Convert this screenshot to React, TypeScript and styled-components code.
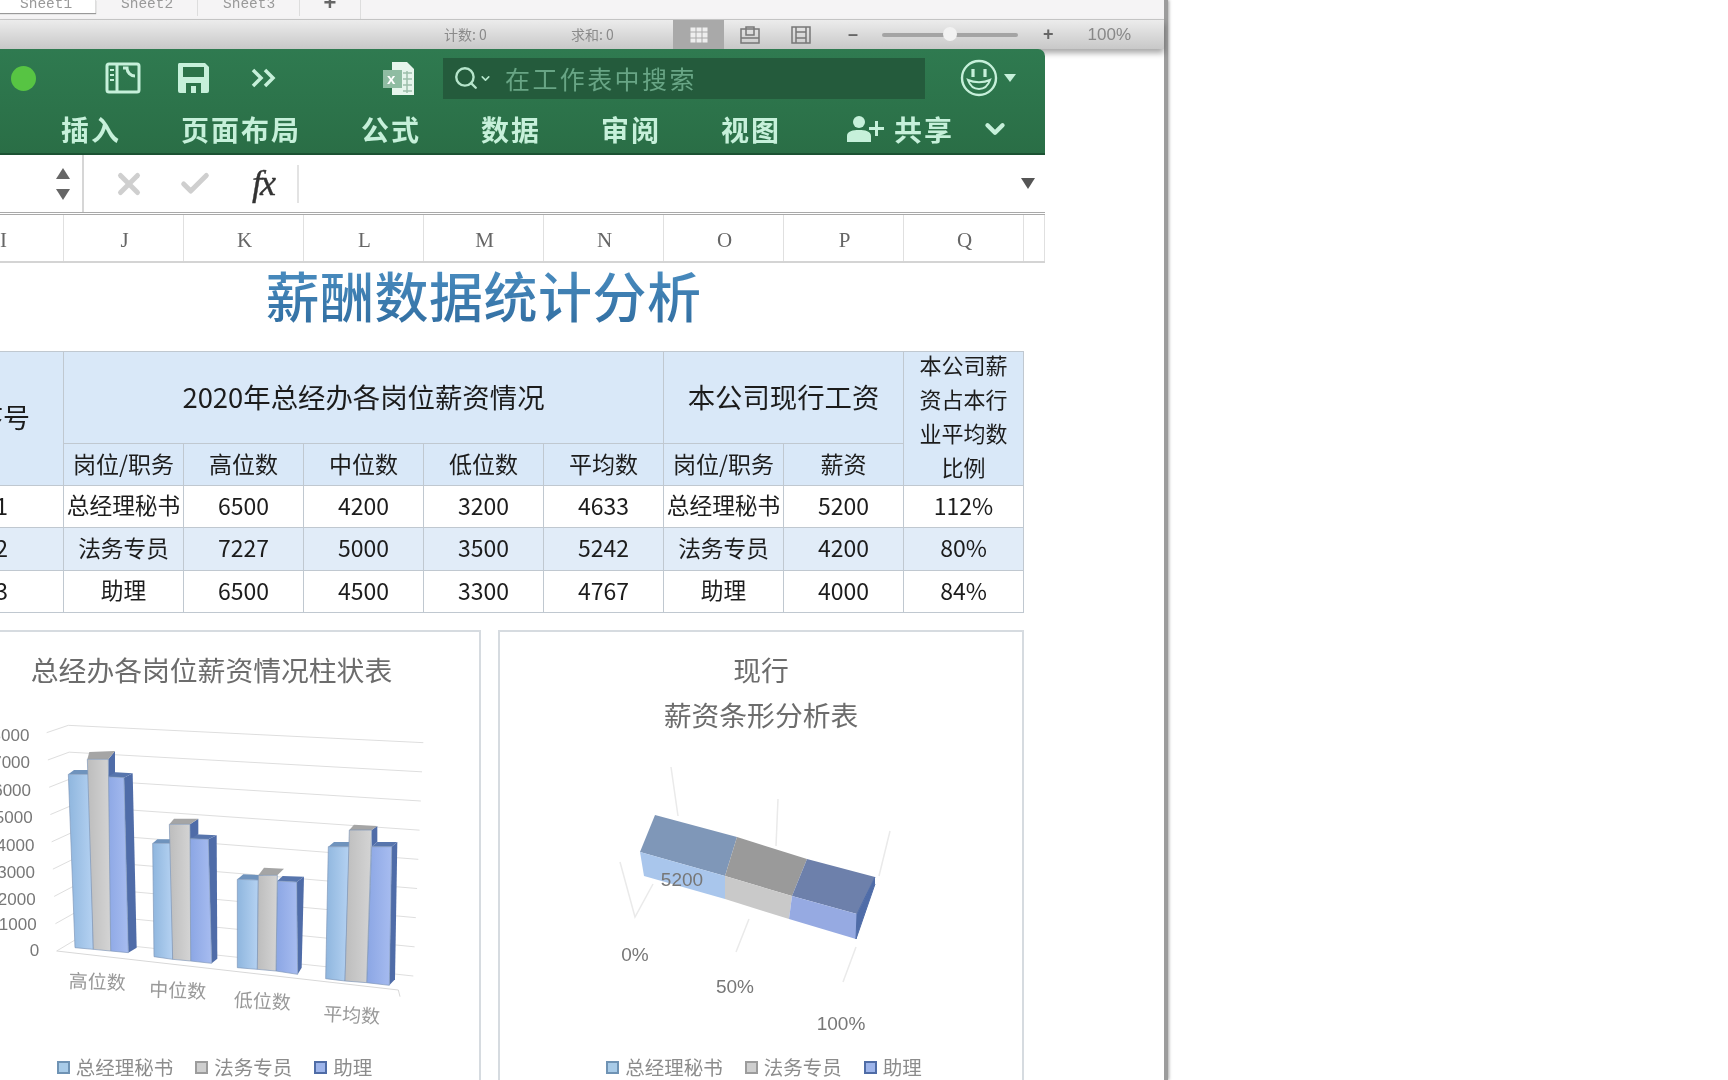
import React from 'react';
import styled, { createGlobalStyle } from 'styled-components';
import { Check, ChevronDown, Search, X } from 'lucide-react';

const cjk = `"Noto Sans CJK SC", "Noto Sans", sans-serif`;

const GlobalStyle = createGlobalStyle`
   html, body {
      margin: 0;
      padding: 0;
      background: #fff;
      overflow: hidden;
   }
`;

const Screen = styled.div`
   width: 1728px;
   height: 1080px;
   overflow: hidden;
   background: #fff;
   font-family: ${cjk};
   filter: blur(0.7px);
`;

const Window = styled.div`
   width: 1164px;
   height: 1080px;
   border-right: 4px solid #9c9c9c;
   box-shadow: 1px 0 3px rgba(0, 0, 0, 0.35);
   background: #fff;
`;

const BackTabs = styled.div`
   height: 19px;
   display: flex;
   background: #f5f4f5;
   border-bottom: 1px solid #c9c9c9;
`;

const BackTab = styled.div<{ $active?: boolean }>`
   width: ${(p) => (p.$active ? 96 : 102)}px;
   height: ${(p) => (p.$active ? 13 : 16)}px;
   box-sizing: border-box;
   padding-left: ${(p) => (p.$active ? 20 : 25)}px;
   font: 14.5px/9px 'Liberation Mono', monospace;
   color: #999;
   background: ${(p) => (p.$active ? '#fff' : 'transparent')};
   border-right: 1px solid #ddd;
   box-shadow: ${(p) => (p.$active ? '0 1px 1px #999' : 'none')};
`;

const BackAdd = styled.div`
   width: 60px;
   text-align: center;
   font: bold 22px/6px 'Liberation Sans', sans-serif;
   color: #666;
   border-right: 1px solid #ddd;
`;

const BackStatus = styled.div`
   height: 29px;
   display: flex;
   align-items: center;
   padding-left: 444px;
   font-size: 14px;
   color: #8a8a8a;
   background: linear-gradient(#ececec, #c8c8c8);
   box-shadow: 0 4px 6px rgba(0, 0, 0, 0.35);
   position: relative;
`;

const StatusText = styled.span<{ $width: number }>`
   width: ${(p) => p.$width}px;
   margin-top: -2px;
`;

const ViewButton = styled.div<{ $active?: boolean }>`
   width: 51px;
   height: 29px;
   display: flex;
   align-items: center;
   justify-content: center;
   background: ${(p) => (p.$active ? '#a9a9a9' : 'transparent')};
`;

const SliderTrack = styled.div`
   width: 136px;
   height: 4px;
   margin: 0 25px 0 24px;
   background: #a4a4a4;
   border-radius: 2px;
   position: relative;
`;

const SliderThumb = styled.div`
   position: absolute;
   left: 61px;
   top: -6px;
   width: 14px;
   height: 14px;
   border-radius: 50%;
   background: #f2f2f2;
`;

const ZoomSign = styled.span<{ $gap?: number }>`
   margin-left: ${(p) => p.$gap || 0}px;
   font: bold 18px 'Liberation Sans', sans-serif;
   color: #666;
`;

const ZoomValue = styled.span`
   margin-left: 34px;
   font: 17px 'Liberation Sans', sans-serif;
   color: #888;
`;

const Front = styled.div`
   width: 1045px;
   position: relative;
`;

const Ribbon = styled.div`
   height: 106px;
   background: linear-gradient(#2f7a50, #2a6e46);
   border-top-right-radius: 7px;
   border-bottom: 2px solid #1c5233;
   box-sizing: border-box;
   color: #c6f0da;
`;

const TitleRow = styled.div`
   height: 58px;
   display: flex;
   align-items: center;
   padding-left: 11px;
`;

const GreenDot = styled.div`
   width: 25px;
   height: 25px;
   border-radius: 50%;
   background: #57c443;
   margin-right: 69px;
`;

const ToolIcon = styled.svg<{ $gap: number }>`
   margin-right: ${(p) => p.$gap}px;
   flex: none;
`;

const SearchBox = styled.div`
   width: 482px;
   height: 41px;
   display: flex;
   align-items: center;
   padding-left: 10px;
   box-sizing: border-box;
   background: #245b3c;
   color: #b5e5cb;
   margin-right: 35px;
`;

const SearchHint = styled.span`
   margin-left: 13px;
   font-size: 25px;
   letter-spacing: 2.4px;
   color: #68a585;
`;

const MiniCaret = styled.div`
   width: 0;
   height: 0;
   margin-left: 6px;
   border-left: 6px solid transparent;
   border-right: 6px solid transparent;
   border-top: 8px solid #c6f0da;
`;

const TabRow = styled.div`
   height: 44px;
   display: flex;
   align-items: center;
   gap: 60px;
   padding-left: 61px;
   font-size: 28px;
   letter-spacing: 2px;
   font-weight: 700;
`;

const ShareGroup = styled.div`
   display: flex;
   align-items: center;
   margin-left: 5px;
`;

const ShareLabel = styled.span`
   margin: 0 26px 0 10px;
`;

const FormulaBar = styled.div`
   height: 57px;
   display: flex;
   align-items: center;
   border-bottom: 3px double #a9a9a9;
   box-sizing: content-box;
`;

const Stepper = styled.div`
   width: 84px;
   height: 57px;
   box-sizing: border-box;
   display: flex;
   flex-direction: column;
   align-items: flex-end;
   justify-content: center;
   gap: 10px;
   padding-right: 12px;
   border-right: 2px solid #d6d6d6;
   margin-right: 12px;
`;

const Triangle = styled.div<{ $down?: boolean; $color?: string }>`
   width: 0;
   height: 0;
   border-left: 7px solid transparent;
   border-right: 7px solid transparent;
   ${(p) =>
      p.$down
         ? `border-top: 11px solid ${p.$color || '#666'};`
         : `border-bottom: 11px solid ${p.$color || '#666'};`}
`;

const FormulaAction = styled.div`
   width: 66px;
   display: flex;
   justify-content: center;
   color: #cfcfcf;
`;

const FxLabel = styled.div`
   width: 68px;
   height: 38px;
   margin-left: 1px;
   border-right: 2px solid #e3e3e3;
   font: italic 36px/36px 'Liberation Serif', serif;
   color: #333;
   text-align: center;
   letter-spacing: -2px;
   -webkit-text-stroke: 0.4px #333;
`;

const FormulaEnd = styled.div`
   margin-left: auto;
   margin-right: 10px;
`;

const ColumnRow = styled.div`
   display: grid;
   grid-template-columns: 64px repeat(8, 120px) 21px;
   height: 46px;
   border-bottom: 2px solid #d4d4d4;
   box-sizing: content-box;
`;

const ColumnHead = styled.div<{ $first?: boolean }>`
   display: flex;
   align-items: center;
   justify-content: ${(p) => (p.$first ? 'flex-start' : 'center')};
   padding-top: 5px;
   padding-left: ${(p) => (p.$first ? 0 : 2)}px;
   border-right: 1px solid #e0e0e0;
   font: 21px 'Liberation Serif', serif;
   color: #666;
`;

const SheetTitle = styled.div`
   width: 967px;
   height: 88px;
   padding-bottom: 26px;
   box-sizing: border-box;
   display: flex;
   align-items: center;
   justify-content: center;
   font-size: 54px;
   font-weight: 500;
   letter-spacing: 0.5px;
`;

const TitleInk = styled.span`
   background: linear-gradient(#4f93c6, #2e6a9d);
   -webkit-background-clip: text;
   background-clip: text;
   color: transparent;
`;

const SalaryGrid = styled.div`
   display: grid;
   width: 1024px;
   grid-template-columns: 64px repeat(8, 120px);
   grid-template-rows: 92px 42px 42px 43px 42px;
   border-top: 1px solid #c0c8d0;
   box-sizing: content-box;
   color: #1c1c1c;
`;

const Cell = styled.div<{
   $tone?: 'head' | 'stripe' | 'plain';
   $size?: number;
   $col?: string;
   $row?: string;
   $cut?: number;
}>`
   display: flex;
   align-items: center;
   justify-content: ${(p) => (p.$cut ? 'flex-end' : 'center')};
   text-align: center;
   overflow: hidden;
   white-space: nowrap;
   box-sizing: border-box;
   padding-right: ${(p) => p.$cut || 0}px;
   padding-bottom: 4px;
   grid-column: ${(p) => p.$col || 'auto'};
   grid-row: ${(p) => p.$row || 'auto'};
   font-size: ${(p) => p.$size || 23}px;
   border-right: 1px solid #c0c8d0;
   border-bottom: 1px solid #c0c8d0;
   background: ${(p) =>
      p.$tone === 'head' ? '#d9e8f8' : p.$tone === 'stripe' ? '#e1ecf8' : '#fff'};
`;

const WrapText = styled.span`
   white-space: normal;
   width: 96px;
   margin-bottom: 3px;
   font-size: 22px;
   line-height: 34px;
`;

const ChartRow = styled.div`
   display: flex;
   gap: 17px;
   margin: 17px 0 0 -58px;
   width: 1082px;
`;

const ChartCard = styled.div<{ $width: number }>`
   width: ${(p) => p.$width}px;
   height: 460px;
   box-sizing: border-box;
   flex: none;
   background: #fff;
   border: 2px solid #d6dbe0;
   padding-top: 15px;
   overflow: hidden;
`;

const ChartTitle = styled.div`
   font-size: 27.8px;
   line-height: 45px;
   color: #6c6c6c;
   text-align: center;
`;

const ChartSvg = styled.svg`
   display: block;
`;

const Legend = styled.div`
   display: flex;
   justify-content: center;
   gap: 22px;
   padding-left: 6px;
   font-size: 19.5px;
   line-height: 26px;
   color: #8c8c8c;
`;

const LegendItem = styled.span`
   display: flex;
   align-items: center;
   gap: 6px;
`;

const LegendSwatch = styled.i<{ $color: string; $edge: string }>`
   width: 9px;
   height: 9px;
   background: ${(p) => p.$color};
   border: 2px solid ${(p) => p.$edge};
`;

const salaryRows = [
   { id: '1', job: '总经理秘书', vals: ['6500', '4200', '3200', '4633'], pay: '5200', ratio: '112%' },
   { id: '2', job: '法务专员', vals: ['7227', '5000', '3500', '5242'], pay: '4200', ratio: '80%' },
   { id: '3', job: '助理', vals: ['6500', '4500', '3300', '4767'], pay: '4000', ratio: '84%' },
];

const columns = ['I', 'J', 'K', 'L', 'M', 'N', 'O', 'P', 'Q', ''];
const ribbonTabs = ['插入', '页面布局', '公式', '数据', '审阅', '视图'];

const legendItems = [
   { label: '总经理秘书', color: '#a8cbe8', edge: '#6f93b4' },
   { label: '法务专员', color: '#cfcfcf', edge: '#9c9c9c' },
   { label: '助理', color: '#9db4ea', edge: '#4f6ca6' },
];

// bars are traced from the picture, coordinates are 3x page px
type Bar = { f: string; top: string; side?: string; fill: string; cap: string };

const columnBars: Bar[] = [
   { f: '205,465 268,465 280,990 225,985', top: '205,465 222,452 285,452 268,465', fill: 'url(#barBlue)', cap: '#6f93bd' },
   { f: '318,472 372,475 385,1000 332,995', top: '318,472 335,458 398,462 372,475', side: '372,475 398,462 410,985 385,1000', fill: 'url(#barPurple)', cap: '#5775ad' },
   { f: '262,420 325,420 332,995 280,990', top: '262,420 268,398 345,395 325,420', side: '325,420 345,395 345,460 325,470', fill: 'url(#barGray)', cap: '#a5a5a5' },
   { f: '458,672 515,672 518,1020 462,1012', top: '458,672 472,660 530,660 515,672', fill: 'url(#barBlue)', cap: '#6f93bd' },
   { f: '570,658 625,660 635,1032 572,1025', top: '570,658 585,645 650,648 625,660', side: '625,660 650,648 652,1018 635,1032', fill: 'url(#barPurple)', cap: '#5775ad' },
   { f: '508,615 570,615 572,1025 518,1020', top: '508,615 522,598 595,598 570,615', side: '570,615 595,598 595,645 570,658', fill: 'url(#barGray)', cap: '#a5a5a5' },
   { f: '712,780 775,782 772,1050 712,1045', top: '712,780 730,765 790,768 775,782', fill: 'url(#barBlue)', cap: '#6f93bd' },
   { f: '832,785 890,788 893,1065 828,1055', top: '832,785 848,770 912,772 890,788', side: '890,788 912,772 905,1045 893,1065', fill: 'url(#barPurple)', cap: '#5775ad' },
   { f: '775,768 832,768 828,1055 772,1050', top: '775,768 792,745 852,748 832,768', fill: 'url(#barGray)', cap: '#a5a5a5' },
   { f: '985,682 1048,682 1035,1085 977,1078', top: '985,682 1002,668 1065,668 1048,682', fill: 'url(#barBlue)', cap: '#6f93bd' },
   { f: '1115,682 1175,682 1168,1098 1100,1090', top: '1115,682 1132,668 1192,668 1175,682', side: '1175,682 1192,668 1185,1080 1168,1098', fill: 'url(#barPurple)', cap: '#5775ad' },
   { f: '1048,632 1115,632 1100,1090 1035,1085', top: '1048,632 1062,616 1132,620 1115,632', side: '1115,632 1132,620 1132,668 1115,682', fill: 'url(#barGray)', cap: '#a5a5a5' },
];

const axisLabels = [
   { t: '8000', x: 88, y: 347 },
   { t: '7000', x: 90, y: 430 },
   { t: '6000', x: 93, y: 513 },
   { t: '5000', x: 98, y: 595 },
   { t: '4000', x: 103, y: 678 },
   { t: '3000', x: 105, y: 760 },
   { t: '2000', x: 107, y: 840 },
   { t: '1000', x: 110, y: 915 },
   { t: '0', x: 118, y: 992 },
];

const categoryLabels = [
   { t: '高位数', x: 292, y: 1090, r: 2 },
   { t: '中位数', x: 533, y: 1116, r: 2 },
   { t: '低位数', x: 787, y: 1148, r: 3 },
   { t: '平均数', x: 1055, y: 1190, r: 3 },
];

const lerp = (a: number, b: number, t: number) => a + (b - a) * t;

const gridLines = Array.from({ length: 9 }, (_, i) => {
   const t = i / 8;
   return `${lerp(140, 170, t)},${lerp(340, 995, t)} ${lerp(205, 225, t)},${lerp(318, 962, t)} ${lerp(1270, 1240, t)},${lerp(370, 1070, t)}`;
});

const ColumnChart: React.FC = () => (
   <ChartSvg width={534} height={362} viewBox="-168 218 1602 1086">
      <defs>
         <linearGradient id="barBlue" x1="0" x2="1" y1="0" y2="0">
            <stop offset="0" stopColor="#8fb6de" />
            <stop offset="1" stopColor="#b5d2f2" />
         </linearGradient>
         <linearGradient id="barGray" x1="0" x2="1" y1="0" y2="0">
            <stop offset="0" stopColor="#bdbdbd" />
            <stop offset="1" stopColor="#d4d4d4" />
         </linearGradient>
         <linearGradient id="barPurple" x1="0" x2="1" y1="0" y2="0">
            <stop offset="0" stopColor="#8ba6e4" />
            <stop offset="1" stopColor="#a7bcf0" />
         </linearGradient>
      </defs>
      {gridLines.map((pts) => (
         <polyline key={pts} points={pts} fill="none" stroke="#dedede" strokeWidth="3" />
      ))}
      <polyline points="170,995 1195,1112 1200,1132" fill="none" stroke="#d8d8d8" strokeWidth="3" />
      {columnBars.map((b) => (
         <g key={b.f}>
            {b.side && <polygon points={b.side} fill="#4f6ca8" />}
            <polygon points={b.top} fill={b.cap} />
            <polygon points={b.f} fill={b.fill} stroke="#7d95b8" strokeWidth="2" />
         </g>
      ))}
      {axisLabels.map((a) => (
         <text key={a.t} x={a.x} y={a.y + 17} textAnchor="end" fontSize="51" fill="#777" fontFamily="'Liberation Sans', sans-serif">
            {a.t}
         </text>
      ))}
      {categoryLabels.map((c) => (
         <text
            key={c.t}
            x={c.x}
            y={c.y + 18}
            textAnchor="middle"
            fontSize="57"
            fill="#999"
            fontFamily={cjk}
            transform={`rotate(${c.r} ${c.x} ${c.y})`}
         >
            {c.t}
         </text>
      ))}
   </ChartSvg>
);

// page coordinates, the svg below starts at (500, 738)
const BarChart3D: React.FC = () => (
   <ChartSvg width={522} height={317} viewBox="500 738 522 317">
      <g fill="none" stroke="#eaeaea" strokeWidth="1.5">
         <polyline points="671,768 678,817" />
         <polyline points="778,800 776,847" />
         <polyline points="890,832 879,877" />
         <polyline points="620,863 635,918 653,885" />
         <polyline points="749,920 736,953" />
         <polyline points="856,948 843,983" />
      </g>
      <polygon points="655,816 737,838 725,877 640,853" fill="#7f97b8" />
      <polygon points="737,838 807,860 792,897 725,877" fill="#9a9a9a" />
      <polygon points="807,860 875,878 857,915 792,897" fill="#6d80ab" />
      <polygon points="640,853 725,877 725,900 644,877" fill="#a9c6ec" />
      <polygon points="725,877 792,897 789,920 725,900" fill="#c9c9c9" />
      <polygon points="792,897 857,915 856,940 789,920" fill="#96aae2" />
      <polyline points="875,878 857,915 856,940 875,885" fill="#4f6ca8" stroke="#4f6ca8" />
      <g fontSize="19" fill="#777" textAnchor="middle" fontFamily="'Liberation Sans', sans-serif">
         <text x="682" y="887">5200</text>
         <text x="635" y="962">0%</text>
         <text x="735" y="994">50%</text>
         <text x="841" y="1031">100%</text>
      </g>
   </ChartSvg>
);

const ChartLegend: React.FC = () => (
   <Legend>
      {legendItems.map((item) => (
         <LegendItem key={item.label}>
            <LegendSwatch $color={item.color} $edge={item.edge} />
            {item.label}
         </LegendItem>
      ))}
   </Legend>
);

const App: React.FC = () => (
   <Screen>
      <GlobalStyle />
      <Window>
         <BackTabs>
            <BackTab $active>Sheet1</BackTab>
            <BackTab>Sheet2</BackTab>
            <BackTab>Sheet3</BackTab>
            <BackAdd>+</BackAdd>
         </BackTabs>
         <BackStatus>
            <StatusText $width={127}>计数: 0</StatusText>
            <StatusText $width={102}>求和: 0</StatusText>
            <ViewButton $active>
               <svg width="20" height="18" viewBox="0 0 20 18" fill="#eee" stroke="#aaa">
                  <rect x="1" y="1" width="18" height="16" />
                  <path d="M7 1v16M13 1v16M1 6h18M1 12h18" />
               </svg>
            </ViewButton>
            <ViewButton>
               <svg width="20" height="18" viewBox="0 0 20 18" fill="none" stroke="#777" strokeWidth="1.5">
                  <path d="M1 3h18v14H1zM1 12h18M6 1h8v8H6z" />
               </svg>
            </ViewButton>
            <ViewButton>
               <svg width="20" height="18" viewBox="0 0 20 18" fill="none" stroke="#777" strokeWidth="1.5">
                  <path d="M1 1h18v16H1zM5 1v16M15 1v16M5 6h10M5 12h10" />
               </svg>
            </ViewButton>
            <ZoomSign $gap={22}>–</ZoomSign>
            <SliderTrack>
               <SliderThumb />
            </SliderTrack>
            <ZoomSign>+</ZoomSign>
            <ZoomValue>100%</ZoomValue>
         </BackStatus>
         <Front>
            <Ribbon>
               <TitleRow>
                  <GreenDot />
                  <ToolIcon $gap={36} width="36" height="32" viewBox="0 0 36 32" fill="none" stroke="#c6f0da" strokeWidth="3">
                     <rect x="2" y="2" width="32" height="28" rx="2" />
                     <path d="M12 2v28M18 6h4a8 8 0 0 0 8 8" />
                     <path d="M5 8h4M5 13h4M5 18h4" strokeWidth="2" />
                  </ToolIcon>
                  <ToolIcon $gap={40} width="33" height="32" viewBox="0 0 33 32">
                     <path fill="#c6f0da" d="M2 1h26l4 4v24a2 2 0 0 1-2 2H3a2 2 0 0 1-2-2V3a2 2 0 0 1 1-2z" />
                     <rect x="6" y="5" width="21" height="10" fill="#2c7349" />
                     <rect x="9" y="21" width="15" height="10" fill="#2c7349" />
                     <rect x="14" y="24" width="5" height="7" fill="#c6f0da" />
                  </ToolIcon>
                  <ToolIcon $gap={104} width="28" height="24" viewBox="0 0 28 24" fill="none" stroke="#c6f0da" strokeWidth="3.5">
                     <path d="M3 4l8 8-8 8M15 4l8 8-8 8" />
                  </ToolIcon>
                  <ToolIcon $gap={28} width="33" height="35" viewBox="0 0 33 35">
                     <path fill="#e6f5ec" d="M10 1h15l7 7v26H10z" />
                     <path stroke="#9dbfab" strokeWidth="1.5" fill="none" d="M21 12h9M21 18h9M21 24h9M21 30h9M25 10v22" />
                     <rect x="1" y="9" width="19" height="18" fill="#8fbca2" />
                     <text x="5" y="23" fontSize="15" fontWeight="700" fill="#fff" fontFamily="'Liberation Sans', sans-serif">x</text>
                  </ToolIcon>
                  <SearchBox>
                     <Search size={26} strokeWidth={2.2} />
                     <ChevronDown size={13} strokeWidth={3} />
                     <SearchHint>在工作表中搜索</SearchHint>
                  </SearchBox>
                  <svg width="38" height="38" viewBox="0 0 38 38" fill="none" stroke="#c6f0da" strokeWidth="2.4">
                     <circle cx="19" cy="19" r="17" />
                     <path d="M13 10v8M25 10v8" strokeWidth="3.2" />
                     <path d="M8 21c2 6 6 9 11 9s9-3 11-9c-6 3-16 3-22 0z" strokeWidth="2" />
                  </svg>
                  <MiniCaret />
               </TitleRow>
               <TabRow>
                  {ribbonTabs.map((tab) => (
                     <span key={tab}>{tab}</span>
                  ))}
                  <ShareGroup>
                     <svg width="38" height="28" viewBox="0 0 38 28" fill="#c6f0da">
                        <circle cx="13" cy="7" r="6" />
                        <path d="M1 27v-6c0-5 6-6 12-6s12 1 12 6v6zM29 6h3v6h6v3h-6v6h-3v-6h-6v-3h6z" />
                     </svg>
                     <ShareLabel>共享</ShareLabel>
                     <ChevronDown size={30} strokeWidth={3.5} />
                  </ShareGroup>
               </TabRow>
            </Ribbon>
            <FormulaBar>
               <Stepper>
                  <Triangle />
                  <Triangle $down />
               </Stepper>
               <FormulaAction>
                  <X size={34} strokeWidth={3.5} />
               </FormulaAction>
               <FormulaAction>
                  <Check size={34} strokeWidth={3.5} />
               </FormulaAction>
               <FxLabel>fx</FxLabel>
               <FormulaEnd>
                  <Triangle $down $color="#555" />
               </FormulaEnd>
            </FormulaBar>
            <ColumnRow>
               {columns.map((c, i) => (
                  <ColumnHead key={i} $first={i === 0}>
                     {c}
                  </ColumnHead>
               ))}
            </ColumnRow>
            <SheetTitle>
               <TitleInk>薪酬数据统计分析</TitleInk>
            </SheetTitle>
            <SalaryGrid>
               <Cell $tone="head" $size={27} $row="1 / 3" $cut={33}>序号</Cell>
               <Cell $tone="head" $size={27.4} $col="2 / 7">2020年总经办各岗位薪资情况</Cell>
               <Cell $tone="head" $size={27.4} $col="7 / 9">本公司现行工资</Cell>
               <Cell $tone="head" $col="9" $row="1 / 3">
                  <WrapText>本公司薪资占本行业平均数比例</WrapText>
               </Cell>
               {['岗位/职务', '高位数', '中位数', '低位数', '平均数', '岗位/职务', '薪资'].map((h, i) => (
                  <Cell key={i} $tone="head" $size={23}>{h}</Cell>
               ))}
               {salaryRows.map((row, r) => {
                  const tone = r === 1 ? 'stripe' : 'plain';
                  return (
                     <React.Fragment key={row.id}>
                        <Cell $tone={tone} $cut={55}>{row.id}</Cell>
                        <Cell $tone={tone} $size={22.7}>{row.job}</Cell>
                        {row.vals.map((v, i) => (
                           <Cell key={i} $tone={tone}>{v}</Cell>
                        ))}
                        <Cell $tone={tone} $size={22.7}>{row.job}</Cell>
                        <Cell $tone={tone}>{row.pay}</Cell>
                        <Cell $tone={tone}>{row.ratio}</Cell>
                     </React.Fragment>
                  );
               })}
            </SalaryGrid>
            <ChartRow>
               <ChartCard $width={539}>
                  <ChartTitle>总经办各岗位薪资情况柱状表</ChartTitle>
                  <ColumnChart />
                  <ChartLegend />
               </ChartCard>
               <ChartCard $width={526}>
                  <ChartTitle>现行</ChartTitle>
                  <ChartTitle>薪资条形分析表</ChartTitle>
                  <BarChart3D />
                  <ChartLegend />
               </ChartCard>
            </ChartRow>
         </Front>
      </Window>
   </Screen>
);

export default App;
